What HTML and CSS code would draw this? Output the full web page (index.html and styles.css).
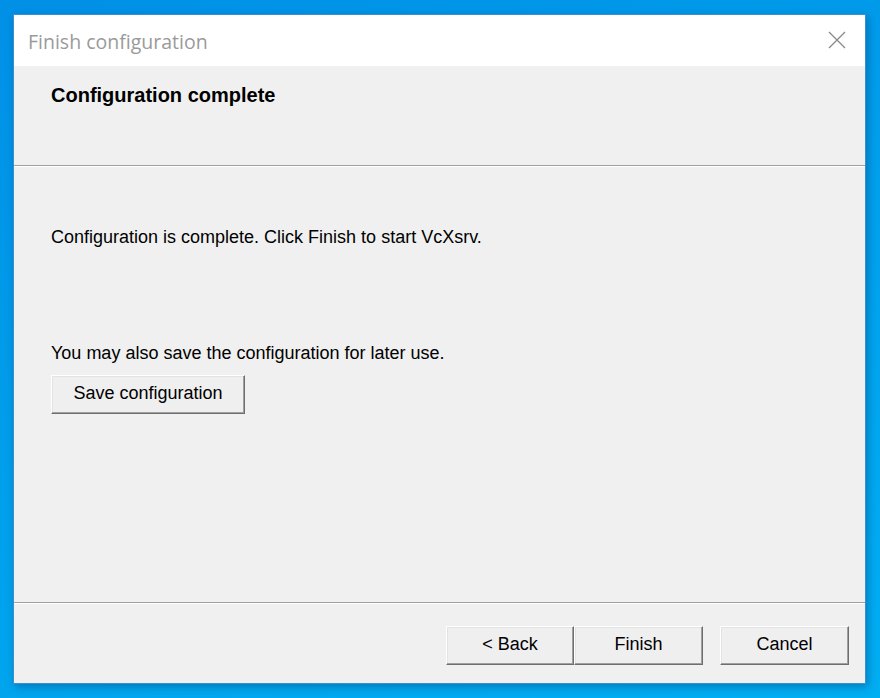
FILE: index.html
```html
<!DOCTYPE html>
<html lang="en">
<head>
<meta charset="UTF-8">
<title>Finish configuration</title>
<link rel="stylesheet" href="styles.css">
</head>
<body>

<div class="window">
    <div class="titlebar">
        <span class="title">Finish configuration</span>
        <svg class="close" width="18" height="18" viewBox="0 0 18 18">
            <path d="M1 1 L17 17 M17 1 L1 17" stroke="#8a8a8a" stroke-width="1.3" fill="none"/>
        </svg>
    </div>
    <div class="header">
        <h3>Configuration complete</h3>
    </div>
    <div class="content">
        <p class="msg">Configuration is complete. Click Finish to start VcXsrv.</p>
        <p class="save-note">You may also save the configuration for later use.</p>
        <button class="btn save">Save configuration</button>
    </div>
    <div class="footer">
        <button class="btn back">&lt; Back</button>
        <button class="btn finish">Finish</button>
        <button class="btn cancel">Cancel</button>
    </div>
</div>

</body>
</html>
```

FILE: styles.css
```css
body {
    margin: 0;
    padding: 0;
    height: 698px;
    overflow: hidden;
    background: linear-gradient(160deg, #0090e6 0%, #00a0ec 50%, #00aef2 100%);
    font-family: "Liberation Sans", Arial, sans-serif;
}
.window {
    margin: 14px 0 0 13px;
    width: 851px;
    height: 668px;
    border: 1px solid #3a8fd0;
    background: #f0f0f0;
    box-shadow: 2px 3px 8px rgba(0, 40, 90, 0.35);
    display: flex;
    flex-direction: column;
}
.titlebar {
    height: 51px;
    flex-shrink: 0;
    background: #ffffff;
    display: flex;
    align-items: center;
    justify-content: space-between;
    padding: 0 19px 0 14px;
}
.title {
    font-family: "Open Sans", "Liberation Sans", sans-serif;
    font-size: 19.5px;
    color: #9a9a9a;
    margin-top: 1px;
}
.close {
    margin-top: -2px;
}
.header {
    height: 100px;
    flex-shrink: 0;
    border-bottom: 1px solid #a0a0a0;
    box-shadow: 0 1px 0 #ffffff;
    padding-left: 37px;
    box-sizing: border-box;
}
.header h3 {
    margin: 18px 0 0;
    font-size: 20px;
    font-weight: bold;
    color: #000000;
}
.content {
    flex: 1;
    padding: 61px 0 0 37px;
    border-bottom: 1px solid #a0a0a0;
    box-shadow: 0 1px 0 #ffffff;
}
.msg, .save-note {
    margin: 0;
    font-size: 18px;
    color: #000000;
}
.save-note {
    margin-top: 95px;
}
.btn {
    font-family: "Liberation Sans", Arial, sans-serif;
    font-size: 18px;
    color: #000000;
    background: #efefef;
    border: 1px solid;
    border-color: #ffffff #6e6e6e #6e6e6e #ffffff;
    box-shadow: inset -1px -1px 0 #a0a0a0, inset 1px 1px 0 #e3e3e3;
    padding: 0 0 2px;
    height: 39px;
}
.save {
    margin-top: 11px;
    width: 194px;
}
.footer {
    height: 80px;
    flex-shrink: 0;
    display: flex;
    align-items: flex-start;
    padding: 23px 0 0 432px;
    box-sizing: border-box;
}
.back {
    width: 128px;
}
.finish {
    width: 129px;
}
.cancel {
    width: 129px;
    margin-left: 17px;
}
```
